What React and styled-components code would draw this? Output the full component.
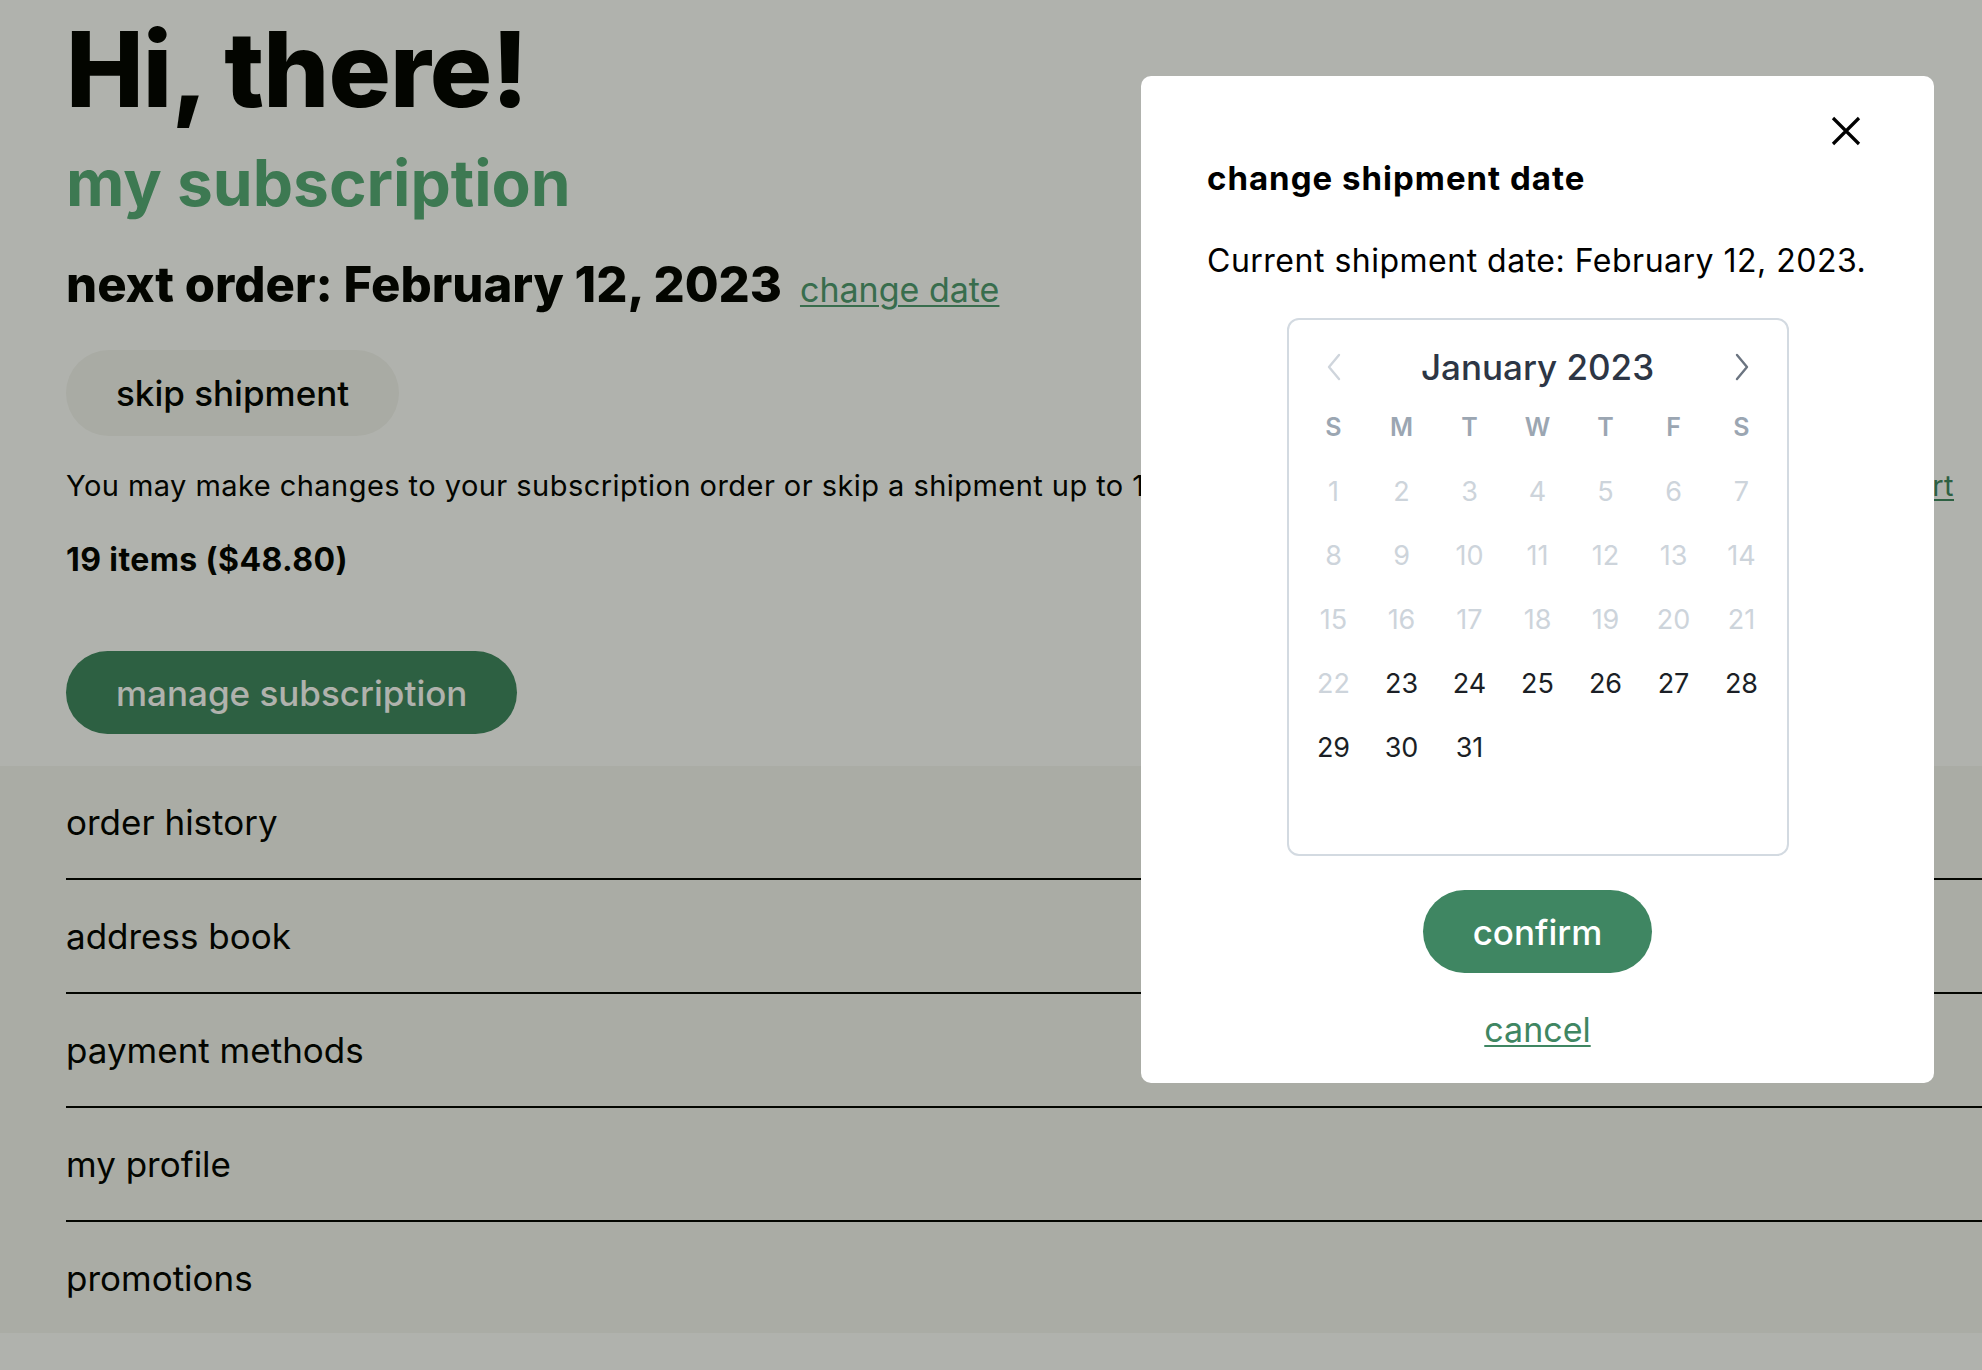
import React from "react";
import styled, { createGlobalStyle } from "styled-components";

const GlobalStyle = createGlobalStyle`
  html, body {
    margin: 0;
    padding: 0;
    background: #ffffff;
    font-family: "Inter", "Liberation Sans", sans-serif;
    color: #000;
  }
  * { box-sizing: border-box; }
`;

const Page = styled.main`
  min-height: 1370px;
  background: #ffffff;
`;

const Intro = styled.section`
  padding: 17px 0 0 66px;
  display: flex;
  flex-direction: column;
  align-items: flex-start;
`;

const Greeting = styled.h1`
  margin: 0;
  font-size: 104px;
  font-weight: 800;
  line-height: 1;
  letter-spacing: -1px;
`;

const SectionTitle = styled.h2`
  margin: 30px 0 0;
  font-size: 64px;
  font-weight: 700;
  line-height: 1;
  color: #56ab79;
`;

const NextOrder = styled.div`
  margin-top: 45px;
  display: flex;
  align-items: baseline;
  gap: 18px;
  strong {
    font-size: 49px;
    font-weight: 800;
    line-height: 1;
  }
`;

const TextLink = styled.a`
  font-size: ${(p) => p.$size || 34}px;
  font-weight: 400;
  color: ${(p) => p.$color || "#4f9a72"};
  text-decoration: underline;
  text-underline-offset: 3px;
  text-decoration-thickness: 2px;
  cursor: pointer;
`;

const PillButton = styled.button`
  margin-top: ${(p) => p.$top || 0}px;
  height: ${(p) => p.$height || 86}px;
  padding: 0 ${(p) => p.$padX || 50}px;
  border: none;
  border-radius: 999px;
  background: ${(p) => p.$bg || "#f5f5f2"};
  color: ${(p) => p.$color || "#000"};
  font-family: inherit;
  font-size: ${(p) => p.$size || 35}px;
  font-weight: 500;
  cursor: pointer;
`;

const Note = styled.p`
  align-self: stretch;
  margin: 35px 0 0;
  padding-right: 28px;
  display: flex;
  justify-content: space-between;
  align-items: baseline;
  font-size: 29px;
  letter-spacing: 0.45px;
  line-height: 1;
  white-space: nowrap;
`;

const ItemCount = styled.p`
  margin: 44px 0 0;
  font-size: 32px;
  font-weight: 700;
  line-height: 1;
  letter-spacing: 0.4px;
`;

const AccountList = styled.nav`
  margin-top: 32px;
  padding-left: 66px;
  background: #f6f6f3;
`;

const AccountRow = styled.div`
  height: 114px;
  display: flex;
  align-items: center;
  font-size: 35px;
  border-bottom: 2px solid #000;
  &:last-child {
    border-bottom: none;
    height: 111px;
  }
`;

const Backdrop = styled.div`
  position: fixed;
  inset: 0;
  background: rgba(8, 14, 0, 0.32);
`;

const Modal = styled.div`
  position: fixed;
  left: 1141px;
  top: 76px;
  width: 793px;
  height: 1007px;
  padding: 33px 66px 0;
  background: #ffffff;
  border-radius: 10px;
  display: flex;
  flex-direction: column;
`;

const ModalTop = styled.div`
  display: flex;
  justify-content: flex-end;
`;

const CloseButton = styled.button`
  width: 44px;
  height: 44px;
  padding: 0;
  border: none;
  background: transparent;
  display: flex;
  align-items: center;
  justify-content: center;
  cursor: pointer;
`;

const ModalTitle = styled.h3`
  margin: 9px 0 0;
  font-size: 33px;
  font-weight: 700;
  line-height: 1;
  letter-spacing: 1px;
`;

const ModalText = styled.p`
  margin: 50px 0 0;
  font-size: 32px;
  line-height: 1;
  letter-spacing: 0.5px;
  white-space: nowrap;
`;

const Calendar = styled.div`
  margin: 41px auto 0;
  width: 502px;
  padding: 19px 11px 11px;
  border: 2px solid #d3dae1;
  border-radius: 12px;
  font-family: "Inter", "Liberation Sans", sans-serif;
`;

const CalHeader = styled.div`
  height: 56px;
  display: grid;
  grid-template-columns: 68px 1fr 68px;
  align-items: center;
`;

const Chevron = styled.button`
  height: 100%;
  padding: 0;
  border: none;
  background: transparent;
  display: flex;
  align-items: center;
  justify-content: center;
  color: ${(p) => (p.$disabled ? "#cfd5dc" : "#6b7480")};
  cursor: pointer;
`;

const MonthLabel = styled.div`
  text-align: center;
  font-size: 35px;
  font-weight: 500;
  color: #2d3645;
`;

const DayGrid = styled.div`
  display: grid;
  grid-template-columns: repeat(7, 68px);
  grid-auto-rows: 64px;
`;

const WeekDay = styled.div`
  display: flex;
  align-items: center;
  justify-content: center;
  font-size: 25px;
  font-weight: 600;
  color: #9ba6b2;
`;

const Day = styled.div`
  display: flex;
  align-items: center;
  justify-content: center;
  font-size: 27px;
  color: ${(p) => (p.$disabled ? "#cdd4db" : "#1b1f26")};
`;

const ModalActions = styled.div`
  margin-top: 34px;
  display: flex;
  flex-direction: column;
  align-items: center;
  gap: 36px;
`;

const ChevronIcon = ({ dir }) => (
  <svg width="16" height="28" viewBox="0 0 16 28" fill="none">
    <polyline
      points={dir === "left" ? "13,2 3,14 13,26" : "3,2 13,14 3,26"}
      stroke="currentColor"
      strokeWidth="2.4"
      strokeLinecap="round"
      strokeLinejoin="round"
    />
  </svg>
);

const CloseIcon = () => (
  <svg width="30" height="30" viewBox="0 0 30 30" fill="none">
    <path d="M2 2 L28 28 M28 2 L2 28" stroke="#000" strokeWidth="3.2" />
  </svg>
);

const accountLinks = [
  "order history",
  "address book",
  "payment methods",
  "my profile",
  "promotions",
];

const weekDays = ["S", "M", "T", "W", "T", "F", "S"];
const days = Array.from({ length: 31 }, (_, i) => i + 1);

export default function App() {
  return (
    <>
      <GlobalStyle />
      <Page>
        <Intro>
          <Greeting>Hi, there!</Greeting>
          <SectionTitle>my subscription</SectionTitle>
          <NextOrder>
            <strong>next order: February 12, 2023</strong>
            <TextLink>change date</TextLink>
          </NextOrder>
          <PillButton $top={40}>skip shipment</PillButton>
          <Note>
            <span>
              You may make changes to your subscription order or skip a shipment up to 1 day before your order ships.
            </span>
            <TextLink $size={29} $color="#3f8662">view cart</TextLink>
          </Note>
          <ItemCount>19 items ($48.80)</ItemCount>
          <PillButton $top={75} $height={83} $bg="#3f8662" $color="#ffffff">
            manage subscription
          </PillButton>
        </Intro>
        <AccountList>
          {accountLinks.map((label) => (
            <AccountRow key={label}>{label}</AccountRow>
          ))}
        </AccountList>
      </Page>

      <Backdrop />
      <Modal role="dialog">
        <ModalTop>
          <CloseButton aria-label="close">
            <CloseIcon />
          </CloseButton>
        </ModalTop>
        <ModalTitle>change shipment date</ModalTitle>
        <ModalText>Current shipment date: February 12, 2023.</ModalText>
        <Calendar>
          <CalHeader>
            <Chevron $disabled>
              <ChevronIcon dir="left" />
            </Chevron>
            <MonthLabel>January 2023</MonthLabel>
            <Chevron>
              <ChevronIcon dir="right" />
            </Chevron>
          </CalHeader>
          <DayGrid>
            {weekDays.map((d, i) => (
              <WeekDay key={i}>{d}</WeekDay>
            ))}
            {days.map((d) => (
              <Day key={d} $disabled={d < 23}>
                {d}
              </Day>
            ))}
            {Array.from({ length: 11 }, (_, i) => (
              <Day key={"e" + i} />
            ))}
          </DayGrid>
        </Calendar>
        <ModalActions>
          <PillButton $height={83} $bg="#3f8662" $color="#ffffff">
            confirm
          </PillButton>
          <TextLink $color="#3f8662">cancel</TextLink>
        </ModalActions>
      </Modal>
    </>
  );
}
